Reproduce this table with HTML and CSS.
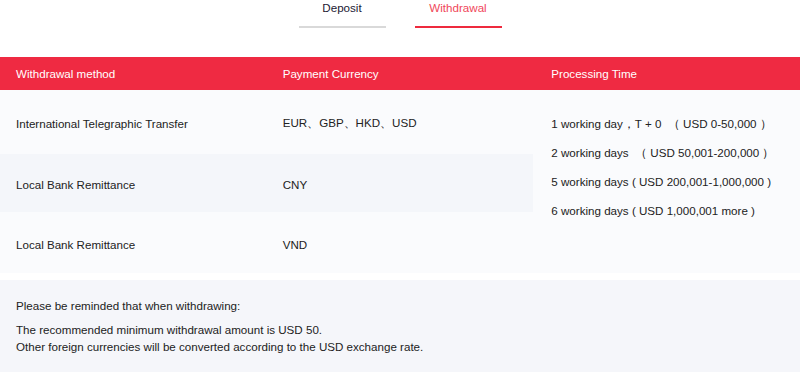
FILE: index.html
```html
<!DOCTYPE html>
<html lang="en">
<head>
<meta charset="utf-8">
<title>Withdrawal</title>
<link rel="stylesheet" href="styles.css">
</head>
<body>
<div class="tabs">
  <div class="tab">Deposit</div>
  <div class="tab active">Withdrawal</div>
</div>
<div class="table">
  <div class="thead">
    <div class="th">Withdrawal method</div>
    <div class="th">Payment Currency</div>
    <div class="th last">Processing Time</div>
  </div>
  <div class="tbody">
    <div class="td r1">International Telegraphic Transfer</div>
    <div class="td r1">EUR、GBP、HKD、USD</div>
    <div class="td time">
      <div class="line">1 working day，T + 0 &nbsp;（ USD 0-50,000 ）</div>
      <div class="line">2 working days &nbsp;（ USD 50,001-200,000 ）</div>
      <div class="line">5 working days ( USD 200,001-1,000,000 )</div>
      <div class="line">6 working days ( USD 1,000,001 more )</div>
    </div>
    <div class="td r2 alt">Local Bank Remittance</div>
    <div class="td r2 alt">CNY</div>
    <div class="td r3">Local Bank Remittance</div>
    <div class="td r3">VND</div>
  </div>
</div>
<div class="note">
  <p class="note-title">Please be reminded that when withdrawing:</p>
  <p class="note-text">The recommended minimum withdrawal amount is USD 50.<br>Other foreign currencies will be converted according to the USD exchange rate.</p>
</div>
</body>
</html>
```
FILE: styles.css
```css
body {
  margin: 0;
  font-family: "Liberation Sans", Arial, sans-serif;
  font-size: 11.6px;
  color: #222;
  background: #fff;
}
.tabs {
  display: flex;
  justify-content: center;
  gap: 29px;
}
.tab {
  width: 87px;
  text-align: center;
  line-height: 15px;
  padding-bottom: 11px;
  border-bottom: 2px solid #d9d9d9;
  color: #1c2033;
}
.tab.active {
  color: #f0475a;
  border-bottom: 2px solid #ee2a3e;
}
.table {
  margin-top: 29px;
}
.thead {
  display: grid;
  grid-template-columns: 1fr 1fr 1fr;
  height: 33.4px;
  background: #ef2a42;
  color: #fff;
}
.th {
  display: flex;
  align-items: center;
  padding-left: 16px;
}
.th.last, .time {
  padding-left: 18px;
}
.tbody {
  display: grid;
  grid-template-columns: 1fr 1fr 1fr;
  grid-template-rows: 63.6px 58.4px 60.6px;
}
.td {
  display: flex;
  align-items: center;
  padding-left: 16px;
  padding-top: 3px;
  background: #fafbfd;
}
.td.alt {
  background: #f4f6fa;
}
.r1 { grid-row: 1; }
.r2 { grid-row: 2; }
.r3 { grid-row: 3; }
.time {
  grid-column: 3;
  grid-row: 1 / span 3;
  display: block;
  padding-top: 19px;
  padding-left: 18px;
}
.line {
  line-height: 29px;
  white-space: nowrap;
}
.note {
  margin-top: 7px;
  background: #f5f6fa;
  padding: 17.5px 16px 17px;
}
.note p {
  margin: 0;
  line-height: 17px;
}
.note-title {
  margin-bottom: 7px !important;
}
```
